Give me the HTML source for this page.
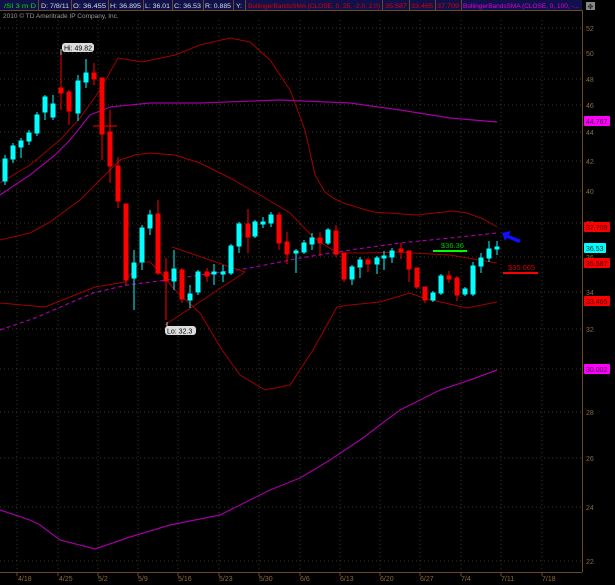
<!DOCTYPE html>
<html><head><meta charset="utf-8"><style>
html,body{margin:0;padding:0;background:#000;width:615px;height:585px;overflow:hidden}
svg{display:block}
text{font-family:"Liberation Sans",sans-serif}
</style></head><body>
<svg width="615" height="585" viewBox="0 0 615 585" xmlns="http://www.w3.org/2000/svg">
<rect width="615" height="585" fill="#000"/>
<g stroke="#3a3522" stroke-width="1" stroke-dasharray="1,3">
<line x1="17" y1="20" x2="17" y2="572"/><line x1="58" y1="20" x2="58" y2="572"/><line x1="98" y1="20" x2="98" y2="572"/><line x1="138" y1="20" x2="138" y2="572"/><line x1="178" y1="20" x2="178" y2="572"/><line x1="219" y1="20" x2="219" y2="572"/><line x1="259" y1="20" x2="259" y2="572"/><line x1="300" y1="20" x2="300" y2="572"/><line x1="340" y1="20" x2="340" y2="572"/><line x1="380" y1="20" x2="380" y2="572"/><line x1="420" y1="20" x2="420" y2="572"/><line x1="461" y1="20" x2="461" y2="572"/><line x1="501" y1="20" x2="501" y2="572"/><line x1="542" y1="20" x2="542" y2="572"/>
<line x1="0" y1="28" x2="582" y2="28"/><line x1="0" y1="53" x2="582" y2="53"/><line x1="0" y1="79" x2="582" y2="79"/><line x1="0" y1="105" x2="582" y2="105"/><line x1="0" y1="132" x2="582" y2="132"/><line x1="0" y1="161" x2="582" y2="161"/><line x1="0" y1="191" x2="582" y2="191"/><line x1="0" y1="223" x2="582" y2="223"/><line x1="0" y1="257" x2="582" y2="257"/><line x1="0" y1="292" x2="582" y2="292"/><line x1="0" y1="329" x2="582" y2="329"/><line x1="0" y1="369" x2="582" y2="369"/><line x1="0" y1="412" x2="582" y2="412"/><line x1="0" y1="458" x2="582" y2="458"/><line x1="0" y1="507" x2="582" y2="507"/><line x1="0" y1="561" x2="582" y2="561"/>
</g>
<line x1="582.5" y1="10" x2="582.5" y2="572" stroke="#6a4a20"/>
<line x1="0" y1="572.5" x2="582" y2="572.5" stroke="#6a4a20"/>
<g stroke="#6a4a20">
<line x1="17" y1="572" x2="17" y2="576"/><line x1="58" y1="572" x2="58" y2="576"/><line x1="98" y1="572" x2="98" y2="576"/><line x1="138" y1="572" x2="138" y2="576"/><line x1="178" y1="572" x2="178" y2="576"/><line x1="219" y1="572" x2="219" y2="576"/><line x1="259" y1="572" x2="259" y2="576"/><line x1="300" y1="572" x2="300" y2="576"/><line x1="340" y1="572" x2="340" y2="576"/><line x1="380" y1="572" x2="380" y2="576"/><line x1="420" y1="572" x2="420" y2="576"/><line x1="461" y1="572" x2="461" y2="576"/><line x1="501" y1="572" x2="501" y2="576"/><line x1="542" y1="572" x2="542" y2="576"/>
</g>
<g font-size="7" fill="#8a6a40">
<text x="18" y="581">4/18</text><text x="59" y="581">4/25</text><text x="98" y="581">5/2</text><text x="138" y="581">5/9</text><text x="178" y="581">5/16</text><text x="219" y="581">5/23</text><text x="259" y="581">5/30</text><text x="300" y="581">6/6</text><text x="340" y="581">6/13</text><text x="380" y="581">6/20</text><text x="420" y="581">6/27</text><text x="461" y="581">7/4</text><text x="501" y="581">7/11</text><text x="542" y="581">7/18</text>
<text x="586" y="31">52</text><text x="586" y="56">50</text><text x="586" y="82">48</text><text x="586" y="108">46</text><text x="586" y="135">44</text><text x="586" y="164">42</text><text x="586" y="194">40</text><text x="586" y="226">38</text><text x="586" y="260">36</text><text x="586" y="295">34</text><text x="586" y="332">32</text><text x="586" y="372">30</text><text x="586" y="415">28</text><text x="586" y="461">26</text><text x="586" y="510">24</text><text x="586" y="564">22</text>
</g>
<g fill="none" stroke="#a000a0" stroke-width="1.2">
<polyline points="0,195 30,175 55,155 70,140 90,115 110,107 150,103 200,103 280,100 350,103 400,110 450,118 497,122"/>
<polyline points="0,510 30,520 40,525 60,540 95,549 130,537 170,525 220,515 240,505 270,490 300,478 330,460 360,440 400,410 440,390 470,380 497,370"/>
<polyline stroke-dasharray="4,3" points="0,330 35,318 93,293 127,285 167,280 200,275 250,268 300,258 350,250 400,243 450,238 497,233"/>
</g>
<g fill="none" stroke="#a00000" stroke-width="1">
<polyline points="0,183 30,165 60,140 80,118 100,90 118,58 142,62 175,55 200,45 230,38 250,42 270,60 290,90 305,130 315,175 325,192 333,198 343,203 373,212 417,215 453,211 467,213 483,219 497,227"/>
<polyline points="0,240 30,233 50,222 80,200 100,180 120,160 135,155 150,153 175,155 200,163 230,178 260,195 290,213 313,237 337,253 367,253 400,252 413,253 450,255 497,263"/>
<polyline points="0,303 45,307 95,287 125,282 140,262 150,262 160,272 175,290 200,313 222,350 240,375 265,390 290,385 313,350 337,307 350,305 380,302 410,293 423,298 467,308 497,302"/>
<polyline points="172,247 245,272"/>
<polyline points="165,325 245,272"/>
</g>
<g stroke-width="1">
<g fill="#00ffff" stroke="#00ffff">
<line x1="5" y1="155" x2="5" y2="185"/><rect x="3" y="159" width="4" height="22"/>
<line x1="13" y1="143" x2="13" y2="163"/><rect x="11" y="146" width="4" height="13"/>
<line x1="21" y1="138" x2="21" y2="158"/><rect x="19" y="141" width="4" height="6"/>
<line x1="29" y1="130" x2="29" y2="145"/><rect x="27" y="133" width="4" height="8"/>
<line x1="37" y1="112" x2="37" y2="136"/><rect x="35" y="115" width="4" height="18"/>
<line x1="45" y1="95" x2="45" y2="120"/><rect x="43" y="97" width="4" height="15"/>
<line x1="53" y1="95" x2="53" y2="120"/><rect x="51" y="104" width="4" height="13"/>
<line x1="78" y1="75" x2="78" y2="121"/><rect x="76" y="81" width="4" height="32"/>
<line x1="86" y1="59" x2="86" y2="88"/><rect x="84" y="73" width="4" height="9"/>
<line x1="134" y1="250" x2="134" y2="310"/><rect x="132" y="263" width="4" height="15"/>
<line x1="142" y1="225" x2="142" y2="270"/><rect x="140" y="228" width="4" height="34"/>
<line x1="150" y1="210" x2="150" y2="235"/><rect x="148" y="215" width="4" height="13"/>
<line x1="174" y1="250" x2="174" y2="290"/><rect x="172" y="269" width="4" height="12"/>
<line x1="190" y1="285" x2="190" y2="308"/><rect x="188" y="294" width="4" height="6"/>
<line x1="198" y1="270" x2="198" y2="295"/><rect x="196" y="272" width="4" height="20"/>
<line x1="214" y1="264" x2="214" y2="285"/><rect x="212" y="272" width="4" height="2"/>
<line x1="223" y1="265" x2="223" y2="282"/><rect x="221" y="272" width="4" height="2"/>
<line x1="231" y1="244" x2="231" y2="275"/><rect x="229" y="246" width="4" height="27"/>
<line x1="239" y1="222" x2="239" y2="253"/><rect x="237" y="224" width="4" height="22"/>
<line x1="255" y1="220" x2="255" y2="238"/><rect x="253" y="222" width="4" height="14"/>
<line x1="263" y1="217" x2="263" y2="228"/><rect x="261" y="222" width="4" height="2"/>
<line x1="271" y1="212" x2="271" y2="227"/><rect x="269" y="215" width="4" height="8"/>
<line x1="296" y1="249" x2="296" y2="273"/><rect x="294" y="251" width="4" height="2"/>
<line x1="304" y1="240" x2="304" y2="254"/><rect x="302" y="243" width="4" height="9"/>
<line x1="312" y1="233" x2="312" y2="250"/><rect x="310" y="238" width="4" height="6"/>
<line x1="328" y1="228" x2="328" y2="245"/><rect x="326" y="230" width="4" height="13"/>
<line x1="352" y1="265" x2="352" y2="285"/><rect x="350" y="267" width="4" height="12"/>
<line x1="360" y1="257" x2="360" y2="278"/><rect x="358" y="260" width="4" height="7"/>
<line x1="377" y1="256" x2="377" y2="274"/><rect x="375" y="258" width="4" height="6"/>
<line x1="384" y1="251" x2="384" y2="270"/><rect x="382" y="256" width="4" height="2"/>
<line x1="392" y1="248" x2="392" y2="263"/><rect x="390" y="251" width="4" height="6"/>
<line x1="433" y1="291" x2="433" y2="302"/><rect x="431" y="293" width="4" height="7"/>
<line x1="441" y1="274" x2="441" y2="295"/><rect x="439" y="276" width="4" height="17"/>
<line x1="465" y1="287" x2="465" y2="296"/><rect x="463" y="289" width="4" height="5"/>
<line x1="473" y1="262" x2="473" y2="296"/><rect x="471" y="266" width="4" height="28"/>
<line x1="481" y1="253" x2="481" y2="273"/><rect x="479" y="258" width="4" height="8"/>
<line x1="489" y1="241" x2="489" y2="262"/><rect x="487" y="249" width="4" height="9"/>
<line x1="497" y1="241" x2="497" y2="255"/><rect x="495" y="247" width="4" height="2"/>
</g>
<g fill="#ff0000" stroke="#ff0000">
<line x1="61" y1="55" x2="61" y2="110"/><rect x="59" y="88" width="4" height="5"/>
<line x1="69" y1="90" x2="69" y2="125"/><rect x="67" y="92" width="4" height="19"/>
<line x1="94" y1="63" x2="94" y2="85"/><rect x="92" y="73" width="4" height="6"/>
<line x1="102" y1="78" x2="102" y2="160"/><rect x="100" y="78" width="4" height="56"/>
<line x1="93" y1="126" x2="117" y2="126"/>
<line x1="110" y1="110" x2="110" y2="183"/><rect x="108" y="132" width="4" height="34"/>
<line x1="118" y1="157" x2="118" y2="208"/><rect x="116" y="166" width="4" height="35"/>
<line x1="126" y1="204" x2="126" y2="285"/><rect x="124" y="204" width="4" height="76"/>
<line x1="158" y1="200" x2="158" y2="275"/><rect x="156" y="214" width="4" height="59"/>
<line x1="166" y1="258" x2="166" y2="320"/><rect x="164" y="272" width="4" height="9"/>
<line x1="182" y1="268" x2="182" y2="303"/><rect x="180" y="270" width="4" height="29"/>
<line x1="207" y1="268" x2="207" y2="282"/><rect x="205" y="272" width="4" height="4"/>
<line x1="248" y1="209" x2="248" y2="253"/><rect x="246" y="224" width="4" height="13"/>
<line x1="279" y1="212" x2="279" y2="250"/><rect x="277" y="215" width="4" height="28"/>
<line x1="287" y1="232" x2="287" y2="264"/><rect x="285" y="242" width="4" height="12"/>
<line x1="320" y1="232" x2="320" y2="256"/><rect x="318" y="238" width="4" height="5"/>
<line x1="336" y1="225" x2="336" y2="257"/><rect x="334" y="231" width="4" height="23"/>
<line x1="344" y1="253" x2="344" y2="282"/><rect x="342" y="253" width="4" height="26"/>
<line x1="368" y1="258" x2="368" y2="272"/><rect x="366" y="260" width="4" height="4"/>
<line x1="401" y1="243" x2="401" y2="259"/><rect x="399" y="249" width="4" height="3"/>
<line x1="409" y1="251" x2="409" y2="282"/><rect x="407" y="251" width="4" height="18"/>
<line x1="417" y1="268" x2="417" y2="289"/><rect x="415" y="268" width="4" height="19"/>
<line x1="425" y1="287" x2="425" y2="303"/><rect x="423" y="287" width="4" height="13"/>
<line x1="449" y1="271" x2="449" y2="283"/><rect x="447" y="276" width="4" height="3"/>
<line x1="457" y1="276" x2="457" y2="301"/><rect x="455" y="278" width="4" height="17"/>
</g>
</g>
<line x1="61" y1="49" x2="61" y2="55" stroke="#bbb"/>
<rect x="62" y="43" width="32" height="9" rx="3" fill="#ddd"/>
<text x="64" y="50.5" font-size="7" fill="#000">Hi: 49.82</text>
<line x1="167" y1="322" x2="167" y2="327" stroke="#bbb"/>
<rect x="165" y="326" width="31" height="9" rx="3" fill="#ddd"/>
<text x="167" y="333.5" font-size="7" fill="#000">Lo: 32.3</text>
<text x="441" y="248" font-size="7.5" fill="#00c000">$36.36</text>
<rect x="433" y="250" width="34" height="2" fill="#00ff00"/>
<text x="508" y="270" font-size="7.5" fill="#d00000">$35.065</text>
<rect x="503" y="272" width="35" height="2" fill="#ff0000"/>
<path d="M502,233 L511,231 L509,235 L521,240 L519,243 L507,238 L505,241 Z" fill="#1010ff"/>
<rect x="584" y="116" width="26" height="10" rx="1" fill="#ff00ff"/><text x="586" y="124" font-size="7" fill="#400040">44.767</text>
<rect x="584" y="222" width="26" height="10" rx="1" fill="#ff0000"/><text x="586" y="230" font-size="7" fill="#400000">37.709</text>
<rect x="584" y="243" width="22" height="10" rx="1" fill="#00ffff"/><text x="586" y="251" font-size="7" fill="#003030">36.53</text>
<rect x="584" y="258" width="26" height="10" rx="1" fill="#ff0000"/><text x="586" y="266" font-size="7" fill="#400000">35.587</text>
<rect x="584" y="296" width="26" height="10" rx="1" fill="#ff0000"/><text x="586" y="304" font-size="7" fill="#400000">33.465</text>
<rect x="584" y="364" width="26" height="10" rx="1" fill="#ff00ff"/><text x="586" y="372" font-size="7" fill="#400040">30.002</text>
<rect x="0" y="0" width="582" height="10" fill="#10104a"/>
<g stroke="#6a4a20"><line x1="38.5" y1="0" x2="38.5" y2="10"/><line x1="71.5" y1="0" x2="71.5" y2="10"/><line x1="108.5" y1="0" x2="108.5" y2="10"/><line x1="143.5" y1="0" x2="143.5" y2="10"/><line x1="172.5" y1="0" x2="172.5" y2="10"/><line x1="203.5" y1="0" x2="203.5" y2="10"/><line x1="233.5" y1="0" x2="233.5" y2="10"/><line x1="245.5" y1="0" x2="245.5" y2="10"/><line x1="382.5" y1="0" x2="382.5" y2="10"/><line x1="409.5" y1="0" x2="409.5" y2="10"/><line x1="435.5" y1="0" x2="435.5" y2="10"/><line x1="461.5" y1="0" x2="461.5" y2="10"/><line x1="0" y1="10.5" x2="582" y2="10.5"/></g>
<g font-size="6.8" lengthAdjust="spacingAndGlyphs">
<text x="4" y="8" fill="#00e000" textLength="32" lengthAdjust="spacingAndGlyphs">/SI 3 m D</text>
<text x="41" y="8" fill="#ddd" textLength="28" lengthAdjust="spacingAndGlyphs">D: 7/8/11</text>
<text x="73" y="8" fill="#ddd" textLength="33" lengthAdjust="spacingAndGlyphs">O: 36.455</text>
<text x="110" y="8" fill="#ddd" textLength="31" lengthAdjust="spacingAndGlyphs">H: 36.895</text>
<text x="145" y="8" fill="#ddd" textLength="25" lengthAdjust="spacingAndGlyphs">L: 36.01</text>
<text x="174" y="8" fill="#ddd" textLength="27" lengthAdjust="spacingAndGlyphs">C: 36.53</text>
<text x="205" y="8" fill="#ddd" textLength="26" lengthAdjust="spacingAndGlyphs">R: 0.885</text>
<text x="236" y="8" fill="#ddd">Y:</text>
<text x="248" y="8" fill="#e00000" textLength="132" lengthAdjust="spacingAndGlyphs">BollingerBandsSMA (CLOSE, 0, 25, -2.0, 2.0)</text>
<text x="385" y="8" fill="#e00000" textLength="22" lengthAdjust="spacingAndGlyphs">35.587</text>
<text x="411" y="8" fill="#e00000" textLength="22" lengthAdjust="spacingAndGlyphs">33.465</text>
<text x="437" y="8" fill="#e00000" textLength="22" lengthAdjust="spacingAndGlyphs">37.709</text>
<text x="463" y="8" fill="#e000e0" textLength="116" lengthAdjust="spacingAndGlyphs">BollingerBandsSMA (CLOSE, 0, 100, -...</text>
</g>
<rect x="586" y="2" width="9" height="8" fill="#888"/>
<text x="587.5" y="9" font-size="7" fill="#222">✥</text>
<text x="3" y="18" font-size="6.5" fill="#999">2010 © TD Ameritrade IP Company, Inc.</text>
</svg>
</body></html>
